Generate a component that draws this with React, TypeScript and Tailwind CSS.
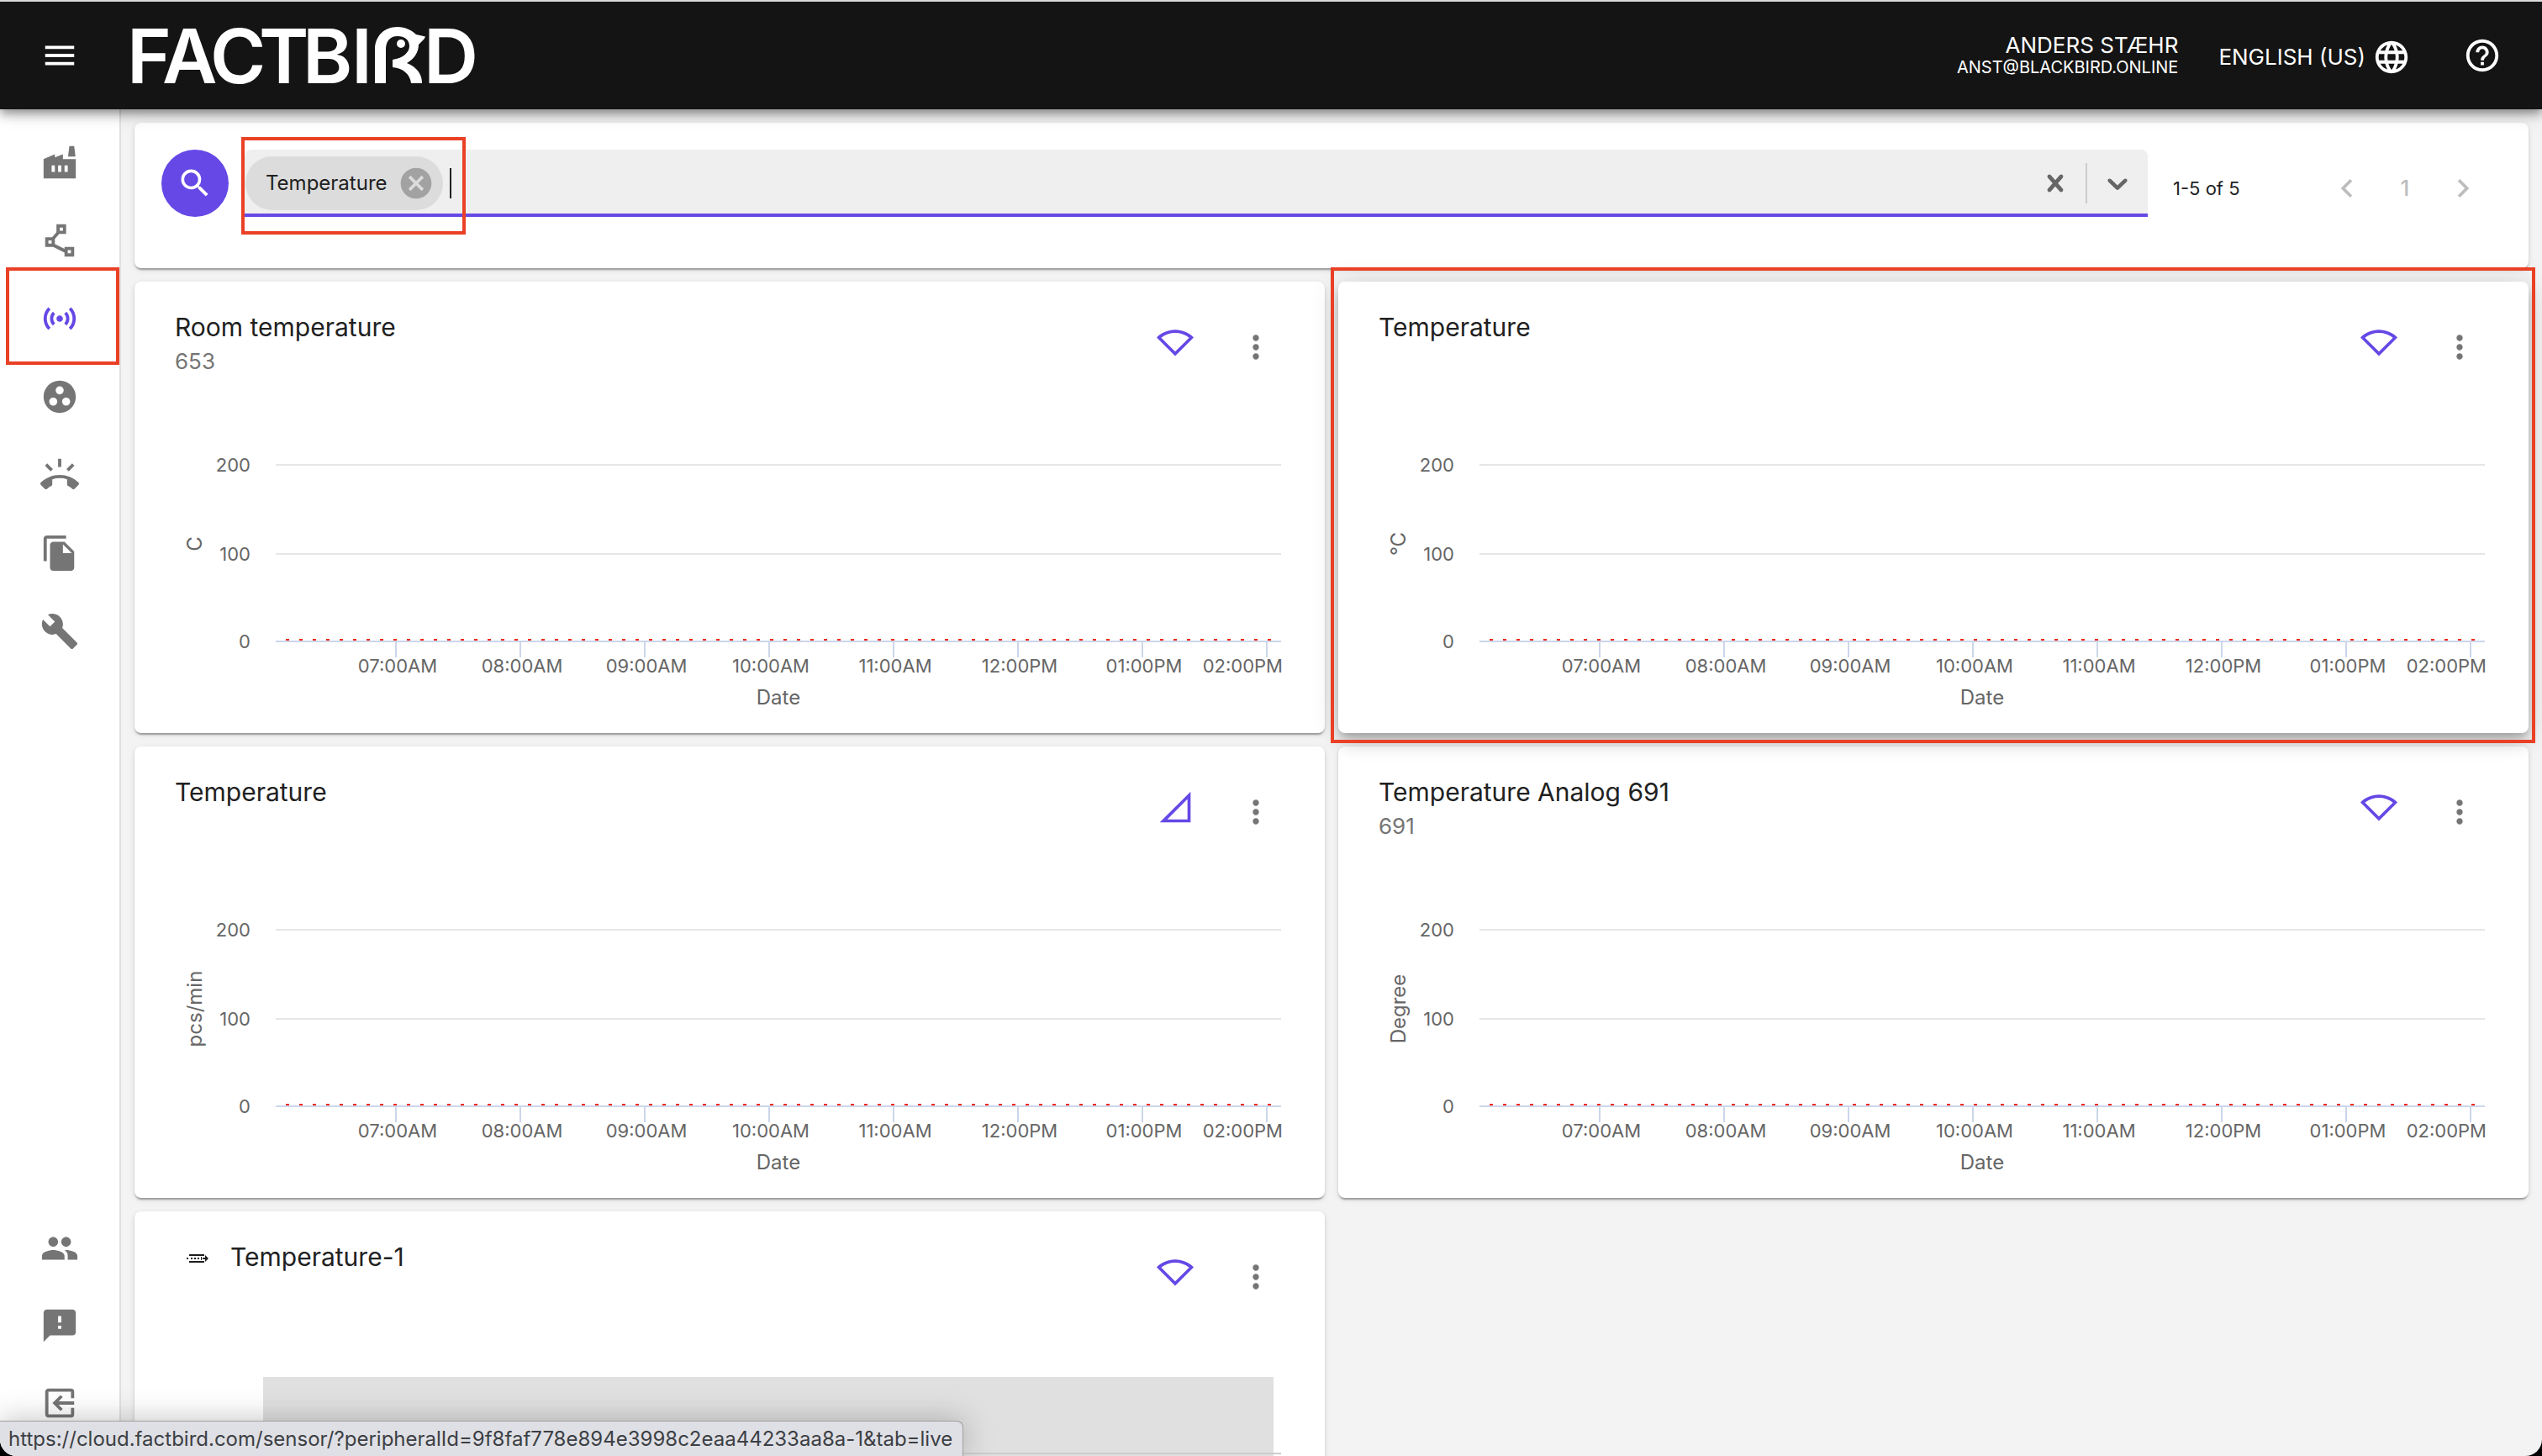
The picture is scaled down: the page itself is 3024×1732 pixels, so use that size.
import React from "react";
import {
    MdBuild,
    MdCancel,
    MdChevronLeft,
    MdChevronRight,
    MdExitToApp,
    MdFeedback,
    MdFileCopy,
    MdGroupWork,
    MdHelpOutline,
    MdLanguage,
    MdMenu,
    MdMoreVert,
    MdPeople,
    MdRingVolume,
    MdSearch,
    MdSensors,
} from "react-icons/md";

type Signal = "wifi" | "cell";

interface Sensor {
    title: string;
    sub?: string;
    unit?: string;
    signal: Signal;
    marked?: boolean;
    loading?: boolean;
}

const sensors: Sensor[] = [
    { title: "Room temperature", sub: "653", unit: "C", signal: "wifi" },
    { title: "Temperature", unit: "°C", signal: "wifi", marked: true },
    { title: "Temperature", unit: "pcs/min", signal: "cell" },
    { title: "Temperature Analog 691", sub: "691", unit: "Degree", signal: "wifi" },
    { title: "Temperature-1", signal: "wifi", loading: true },
];

const hours = ["07:00AM", "08:00AM", "09:00AM", "10:00AM", "11:00AM", "12:00PM", "01:00PM", "02:00PM"];

const levels = [
    { label: "200", y: 78 },
    { label: "100", y: 184 },
    { label: "0", y: 288 },
];

function FactoryIcon() {
    return (
        <svg width="46" height="46" viewBox="0 0 24 24" fill="currentColor">
            <path d="M22 10v12H2V10l7-3v2l5-2v3h8zm-4.8-1.5L18 2h3l.8 6.5h-4.6zM11 18h2v-4h-2v4zm-4 0h2v-4H7v4zm10-4h-2v4h2v-4z" />
        </svg>
    );
}

function PolylineIcon() {
    return (
        <svg width="46" height="46" viewBox="0 0 24 24" fill="currentColor">
            <path d="M15 16v1.26l-6-3v-3.17L11.7 8H16V2h-6v4.9L7.3 10H3v6h5l7 3.5V22h6v-6h-6zM12 4h2v2h-2V4zM7 14H5v-2h2v2zm12 6h-2v-2h2v2z" />
        </svg>
    );
}

function SignalIcon({ type }: { type: Signal }) {
    return (
        <svg width="44" height="44" viewBox="0 0 24 24" fill="#6548e6">
            {type === "wifi" ? (
                <path d="M12 6c3.33 0 6.49 1.08 9.08 3.07L12 18.17l-9.08-9.1C5.51 7.08 8.67 6 12 6m0-2C7.31 4 3.07 5.9 0 8.98L12 21 24 8.98C20.93 5.9 16.69 4 12 4z" />
            ) : (
                <path d="M2 22h20V2L2 22zm18-2H6.83L20 6.83V20z" />
            )}
        </svg>
    );
}

function Logo() {
    return (
        <svg width="420" height="110" viewBox="0 -20 420 110" fill="#fff" role="img" aria-label="Factbird">
            <text y="68" x="3 45 102 160 212 270" fontFamily="Inter, sans-serif" fontWeight="600" fontSize="90">FACTBI</text>
            {/* the R is a bird looking right */}
            <path d="M298 68V28c0-16 11-27 27-27 9 0 17 4 22 9l11 2.500-1.500 3L350 22c0 9-5 17-14 22 12 5 18 13 18 24h-13c-1-10-9-18-22-19v-9c13-2 20-9 20-16 0-8-6-12-14-12-9 0-14 6-14 16v40z" />
            <circle cx="329" cy="21" r="5" />
            <text y="68" x="356" fontFamily="Inter, sans-serif" fontWeight="600" fontSize="90">D</text>
        </svg>
    );
}

const topLinks = [
    { name: "Factory", icon: <FactoryIcon /> },
    { name: "Lines", icon: <PolylineIcon /> },
    { name: "Sensors", icon: <MdSensors size={46} />, active: true },
    { name: "Groups", icon: <MdGroupWork size={46} /> },
    { name: "Andon", icon: <MdRingVolume size={46} /> },
    { name: "Reports", icon: <MdFileCopy size={46} /> },
    { name: "Tools", icon: <MdBuild size={46} /> },
];

const bottomLinks = [
    { name: "Users", icon: <MdPeople size={46} /> },
    { name: "Feedback", icon: <MdFeedback size={46} /> },
    { name: "Log out", icon: <MdExitToApp size={46} className="-scale-x-100" /> },
];

function Header() {
    return (
        <header className="relative z-20 flex h-[130px] shrink-0 items-center border-t-2 border-[#d9dbdd] bg-[#141414] pr-12 text-white shadow-[0_4px_8px_-2px_rgba(0,0,0,0.2),0_8px_10px_rgba(0,0,0,0.14),0_2px_20px_rgba(0,0,0,0.3)]">
            <button aria-label="Menu" className="flex w-[142px] justify-center">
                <MdMenu size={46} />
            </button>
            <a href="#" className="ml-1.5">
                <Logo />
            </a>
            <div className="ml-auto text-right">
                <p className="text-[26px] leading-7">ANDERS STÆHR</p>
                <p className="text-[20px] leading-6">ANST@BLACKBIRD.ONLINE</p>
            </div>
            <button className="ml-12 flex items-center gap-2 pt-1 text-[26px] leading-7">
                ENGLISH (US)
                <MdLanguage size={46} />
            </button>
            <button aria-label="Help" className="ml-[62px]">
                <MdHelpOutline size={46} />
            </button>
        </header>
    );
}

function Sidebar() {
    return (
        <nav className="flex w-36 shrink-0 flex-col justify-between border-r-2 border-[#e0e0e0] bg-white py-10 text-[#757575]">
            <div className="flex flex-col gap-[47px]">
                {topLinks.map((link) => (
                    <a key={link.name} href="#" aria-label={link.name} className={link.active ? "relative flex justify-center text-[#6548e6]" : "flex justify-center"}>
                        {link.icon}
                        {link.active && <span className="absolute -top-[38px] left-[7px] h-[116px] w-[135px] border-4 border-[#ea4025]" />}
                    </a>
                ))}
            </div>
            <div className="flex flex-col gap-[46px]">
                {bottomLinks.map((link) => (
                    <a key={link.name} href="#" aria-label={link.name} className="flex justify-center">
                        {link.icon}
                    </a>
                ))}
            </div>
        </nav>
    );
}

function SearchBar() {
    return (
        <section className="flex rounded-lg bg-white pt-8 pb-[61px] pl-8 shadow-[0_4px_2px_-2px_rgba(0,0,0,0.2),0_2px_2px_rgba(0,0,0,0.14),0_2px_6px_rgba(0,0,0,0.12)]">
            <button aria-label="Search" className="flex size-20 shrink-0 items-center justify-center rounded-full bg-[#6548e6] text-white">
                <MdSearch size={44} />
            </button>

            <div className="relative ml-[19px] flex h-20 flex-1 items-center rounded-t-lg bg-[#efefef] pr-4 pl-px shadow-[inset_0_-4px_0_#6548e6]">
                <div className="flex h-16 items-center gap-3 rounded-full bg-[#dcdcdc] pr-2.5 pl-6">
                    <span className="text-[24px] leading-8 text-[#212121]">Temperature</span>
                    <button aria-label="Remove Temperature" className="text-[#a2a2a2]">
                        <MdCancel size={44} />
                    </button>
                </div>
                <span className="ml-2 h-9 w-0.5 bg-[#212121]" />
                <input aria-label="Search sensors" className="h-16 flex-1 bg-transparent text-[24px] outline-none" />
                <button aria-label="Clear" className="text-[#666]">
                    <svg width="40" height="40" viewBox="0 0 20 20" fill="currentColor">
                        <path d="M14.348 14.849c-0.469 0.469-1.229 0.469-1.697 0l-2.651-3.030-2.651 3.029c-0.469 0.469-1.229 0.469-1.697 0-0.469-0.469-0.469-1.229 0-1.697l2.758-3.15-2.759-3.152c-0.469-0.469-0.469-1.228 0-1.697s1.228-0.469 1.697 0l2.652 3.031 2.651-3.031c0.469-0.469 1.228-0.469 1.697 0s0.469 1.229 0 1.697l-2.758 3.152 2.758 3.15c0.469 0.469 0.469 1.229 0 1.698z" />
                    </svg>
                </button>
                <span className="mx-4 h-12 w-0.5 bg-[#ccc]" />
                <button aria-label="Open" className="text-[#666]">
                    <svg width="40" height="40" viewBox="0 0 20 20" fill="currentColor">
                        <path d="M4.516 7.548c0.436-0.446 1.043-0.481 1.576 0l3.908 3.747 3.908-3.747c0.533-0.481 1.141-0.446 1.574 0 0.436 0.445 0.408 1.197 0 1.615-0.406 0.418-4.695 4.502-4.695 4.502-0.217 0.223-0.502 0.335-0.787 0.335s-0.570-0.112-0.789-0.335c0 0-4.287-4.084-4.695-4.502s-0.436-1.170 0-1.615z" />
                    </svg>
                </button>
                <span className="pointer-events-none absolute -top-[15px] -left-1 h-[116px] w-[267px] border-4 border-[#ea4025]" />
            </div>

            <div className="flex h-20 w-[453px] shrink-0 items-center justify-between pt-3 pr-14 pl-[30px]">
                <p className="text-[22px] leading-8 text-[#212121]">1-5 of 5</p>
                <div className="flex items-center gap-[25px] text-[#bdbdbd]">
                    <button aria-label="Previous page">
                        <MdChevronLeft size={44} />
                    </button>
                    <button className="w-11 text-[26px] leading-8 font-medium">1</button>
                    <button aria-label="Next page">
                        <MdChevronRight size={44} />
                    </button>
                </div>
            </div>
        </section>
    );
}

function Chart({ unit }: { unit?: string }) {
    return (
        <svg viewBox="0 0 1416 397" className="block w-full" fontFamily="Inter, sans-serif" fontSize="22" fill="#666">
            {levels.map((l) => (
                <g key={l.label}>
                    <line x1="168" x2="1364" y1={l.y} y2={l.y} stroke={l.label === "0" ? "#ccd6eb" : "#e6e6e6"} strokeWidth="2" />
                    <text x="138" y={l.y + 8} textAnchor="end">{l.label}</text>
                </g>
            ))}
            {hours.map((h, i) => {
                const x = 311 + i * 148;
                const last = i === hours.length - 1;
                return (
                    <g key={h}>
                        <line x1={x} x2={x} y1="289" y2="307" stroke="#ccd6eb" strokeWidth="2" />
                        <text x={last ? 1366 : x + 2} y="325" textAnchor={last ? "end" : "middle"}>{h}</text>
                    </g>
                );
            })}
            <line x1="180" x2="1352" y1="286" y2="286" stroke="#ee2a1a" strokeWidth="2" strokeDasharray="4 12" />
            <text x="766" y="363" fontSize="24" textAnchor="middle">Date</text>
            <text transform="translate(80 172) rotate(-90)" fontSize="24" textAnchor="middle">{unit}</text>
        </svg>
    );
}

function LoadingChart() {
    return (
        <svg viewBox="0 0 1416 397" className="block w-full">
            <rect x="153" y="57" width="1202" height="290" fill="#e0e0e0" />
            <line x1="168" x2="1364" y1="148" y2="148" stroke="#ccc" strokeWidth="2" />
        </svg>
    );
}

function SensorCard({ sensor }: { sensor: Sensor }) {
    return (
        <article
            className={
                sensor.marked
                    ? "relative z-10 rounded-lg bg-white shadow-[0_6px_10px_-2px_rgba(0,0,0,0.2),0_12px_20px_rgba(0,0,0,0.14),0_2px_36px_rgba(0,0,0,0.12)]"
                    : "rounded-lg bg-white shadow-[0_4px_2px_-2px_rgba(0,0,0,0.2),0_2px_2px_rgba(0,0,0,0.14),0_2px_6px_rgba(0,0,0,0.12)]"
            }
        >
            <div className="flex h-[140px] items-start pr-[60px] pl-12">
                {sensor.loading && (
                    <div className="mt-[34px] mr-3 flex h-10 w-[54px] items-center justify-center pt-1">
                        {/* thermocouple probe */}
                        <svg width="26" height="10" viewBox="0 0 26 10" fill="#1c1c1c">
                            <path d="M3 0h18v2H3zM3 8h18v2H3zM0 4h2v2H0zM5 4h2v2H5zM9 4h2v2H9zM13 4h2v2h-2zM17 3h1v4h-1zM19 4h3V1l4 4-4 4V6h-3z" />
                        </svg>
                    </div>
                )}
                <div className="pt-[34px]">
                    <h2 className="text-[30px] leading-10 text-[#212121]">{sensor.title}</h2>
                    {sensor.sub && <p className="text-[26px] leading-[42px] text-[#757575]">{sensor.sub}</p>}
                </div>
                <div className="ml-auto flex items-start gap-[52px] pt-[50px]">
                    <SignalIcon type={sensor.signal} />
                    <button aria-label="More options" className="mt-1.5 text-[#757575]">
                        <MdMoreVert size={44} />
                    </button>
                </div>
            </div>
            {sensor.loading ? <LoadingChart /> : <Chart unit={sensor.unit} />}
            {sensor.marked && <span className="pointer-events-none absolute -top-[17px] -right-2 -bottom-3 -left-[9px] border-4 border-[#ea4025]" />}
        </article>
    );
}

export default function App() {
    return (
        <div className="h-screen bg-black">
            <div className="relative flex h-full flex-col overflow-hidden rounded-b-[20px] bg-[#f3f3f3] font-['Inter',sans-serif]">
                <Header />
                <div className="flex min-h-0 flex-1">
                    <Sidebar />
                    <main className="min-w-0 flex-1 overflow-hidden p-4">
                        <SearchBar />
                        <div className="mt-4 grid grid-cols-2 gap-4">
                            {sensors.map((sensor, index) => (
                                <SensorCard key={index} sensor={sensor} />
                            ))}
                        </div>
                    </main>
                </div>

                {/* link preview in the corner */}
                <div className="absolute bottom-0 left-0 z-30 h-[42px] rounded-tr-lg border-t border-r border-[#a0a0a0] bg-[#dfe0e5] pr-3 pl-2.5 text-[24px] leading-[41px] text-[#3c3f44] shadow-[0_0_36px_rgba(0,0,0,0.25)]">
                    https://cloud.factbird.com/sensor/?peripheralId=9f8faf778e894e3998c2eaa44233aa8a-1&amp;tab=live
                </div>
            </div>
        </div>
    );
}
